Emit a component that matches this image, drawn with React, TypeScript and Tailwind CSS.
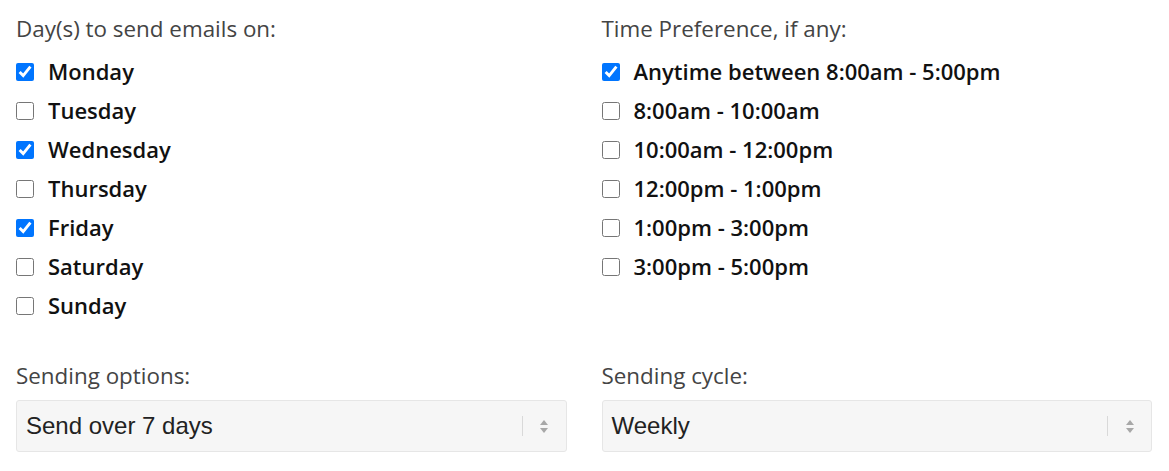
import { useState } from "react";

const days = [
  { label: "Monday", checked: true },
  { label: "Tuesday", checked: false },
  { label: "Wednesday", checked: true },
  { label: "Thursday", checked: false },
  { label: "Friday", checked: true },
  { label: "Saturday", checked: false },
  { label: "Sunday", checked: false },
];

const times = [
  { label: "Anytime between 8:00am - 5:00pm", checked: true },
  { label: "8:00am - 10:00am", checked: false },
  { label: "10:00am - 12:00pm", checked: false },
  { label: "12:00pm - 1:00pm", checked: false },
  { label: "1:00pm - 3:00pm", checked: false },
  { label: "3:00pm - 5:00pm", checked: false },
];

function CheckRow({ label, checked }: { label: string; checked: boolean }) {
  const [on, setOn] = useState(checked);
  return (
    <label className="flex items-center h-[39px] cursor-pointer">
      <input
        type="checkbox"
        checked={on}
        onChange={() => setOn(!on)}
        className="w-[18px] h-[18px] m-0 accent-[#0075ff]"
      />
      <span className="ml-[14px] text-[22px] font-semibold text-[#111]">{label}</span>
    </label>
  );
}

function SelectBox({ value }: { value: string }) {
  return (
    <div className="flex items-center h-[52px] bg-[#f6f6f6] border border-[#e6e6e6] rounded-[3px]">
      <span className="flex-1 pl-[9px] text-[24px] text-[#222] font-['Liberation_Sans',Arial,sans-serif]">
        {value}
      </span>
      <span className="w-px h-[20px] bg-[#d9d9d9]" />
      <span className="w-[43px] flex flex-col items-center justify-center gap-[3px]">
        <svg width="8" height="5" viewBox="0 0 8 5">
          <path d="M0 5 L4 0 L8 5 Z" fill="#a8a8a8" />
        </svg>
        <svg width="8" height="5" viewBox="0 0 8 5">
          <path d="M0 0 L4 5 L8 0 Z" fill="#a8a8a8" />
        </svg>
      </span>
    </div>
  );
}

export default function App() {
  return (
    <div className="w-[1169px] h-[471px] bg-white pl-4 pr-[17px] font-['Open_Sans',sans-serif] overflow-hidden">
      <div className="grid grid-cols-2 gap-x-[35px]">
        <div>
          <div className="pt-[12px] h-[52px] text-[22.4px] text-[#444]">Day(s) to send emails on:</div>
          {days.map((d) => (
            <CheckRow key={d.label} {...d} />
          ))}
        </div>
        <div>
          <div className="pt-[12px] h-[52px] text-[22.4px] text-[#444]">Time Preference, if any:</div>
          {times.map((t) => (
            <CheckRow key={t.label} {...t} />
          ))}
        </div>
        <div className="mt-[34px]">
          <div className="h-[41px] text-[22.4px] text-[#444]">Sending options:</div>
          <SelectBox value="Send over 7 days" />
        </div>
        <div className="mt-[34px]">
          <div className="h-[41px] text-[22.4px] text-[#444]">Sending cycle:</div>
          <SelectBox value="Weekly" />
        </div>
      </div>
    </div>
  );
}
